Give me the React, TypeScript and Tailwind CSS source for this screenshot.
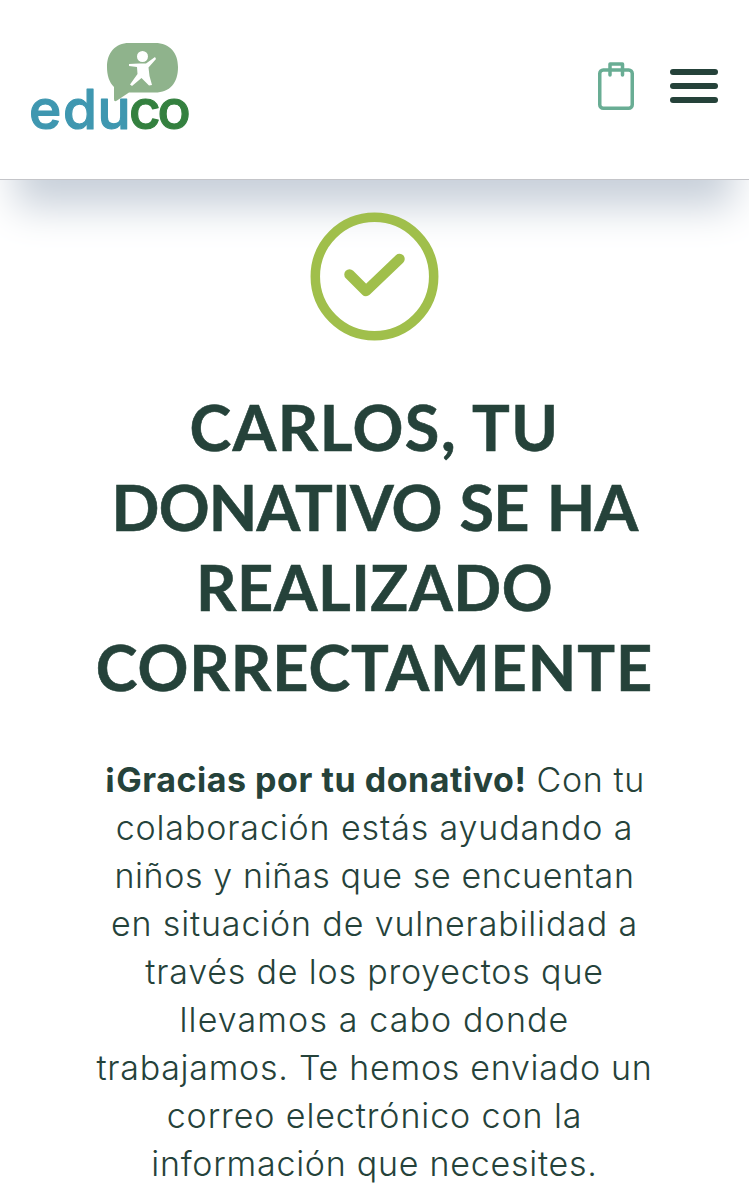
import React from "react";

function Logo() {
  return (
    <svg className="h-[92px] w-[164px] overflow-visible" viewBox="28 42 164 92" role="img" aria-label="educo">
      <text
        x="29 63 97.500 129 157.500"
        y="128.500"
        strokeWidth="1.200"
        strokeLinejoin="round"
        className="fill-[#3f97b0] stroke-[#3f97b0] font-['Inter'] text-[55px] font-medium"
      >
        edu<tspan className="fill-[#34803f] stroke-[#34803f]">co</tspan>
      </text>
      <path d="M129 43H155C170 43 178 53 178 67C178 83 170 92.500 155 92.500H129L117 100.500Q114 102.500 114 99V87C109 82 107 75 107 67C107 53 115 43 129 43Z" fill="#8fb38c" />
      <circle cx="142.500" cy="56.500" r="5.500" fill="white" />
      <path d="M129 64L139 63.500H146L155 57L156 59L148.500 67.500L149.500 76L152 85L149 85.500L141.500 78L132 86L130 84.500L137.500 74L137 67L129 66Z" fill="white" />
    </svg>
  );
}

export default function App() {
  return (
    <div className="min-h-[1200px] w-full overflow-hidden bg-white text-[#25423a]">
      <header className="flex h-[180px] items-start justify-between border-b border-[#c4c5c9] bg-white pt-[42px] pr-[31px] pl-7 shadow-[0_42px_38px_-15px_rgb(200,208,218)]">
        <Logo />
        <div className="flex gap-9 pt-5">
          <svg className="h-12 w-9" viewBox="0 0 36 48" fill="none" stroke="#69ad94" strokeWidth="3.500" strokeLinecap="round" strokeLinejoin="round">
            <rect x="1.750" y="8" width="32.500" height="38.250" rx="3.500" />
            <path d="M12 13V2H24.500V13" />
          </svg>
          <div className="flex flex-col gap-2 pt-[7px]">
            <span className="h-1.5 w-12 rounded-full bg-[#25423a]" />
            <span className="h-1.5 w-12 rounded-full bg-[#25423a]" />
            <span className="h-1.5 w-12 rounded-full bg-[#25423a]" />
          </div>
        </div>
      </header>

      <main className="flex flex-col items-center pt-8 text-center whitespace-nowrap">
        <svg className="relative h-[129px] w-[129px]" viewBox="0 0 129 129" fill="none" stroke="#a0bf4b" strokeWidth="9.500">
          <circle cx="64.500" cy="64.500" r="59.200" />
          <path d="M39.500 62.500L56 79L89.500 47" strokeLinecap="round" strokeLinejoin="round" strokeWidth="10.500" />
        </svg>

        <h1 className="mt-[46px] flex flex-col items-center font-['Lato',sans-serif] text-[63px] leading-[80px] font-bold [-webkit-text-stroke:0.6px_#25423a]">
          <span className="tracking-[1.5px]">CARLOS, TU</span>
          <span className="tracking-[-0.8px] [word-spacing:3.500px]">DONATIVO SE HA</span>
          <span className="tracking-[0.5px]">REALIZADO</span>
          <span className="tracking-[0.95px]">CORRECTAMENTE</span>
        </h1>

        <p className="mt-[49px] flex flex-col items-center font-['Inter',sans-serif] text-[34px] leading-[48px] font-light">
          <span className="tracking-[0.6px]">
            <b className="font-bold tracking-[0.53px] [font-feature-settings:'case']">¡Gracias por tu donativo!</b> Con tu
          </span>
          <span className="tracking-[0.87px]">colaboración estás ayudando a</span>
          <span className="tracking-[0.62px]">niños y niñas que se encuentan</span>
          <span className="tracking-[0.86px]">en situación de vulnerabilidad a</span>
          <span className="tracking-[0.82px]">través de los proyectos que</span>
          <span className="tracking-[1.12px]">llevamos a cabo donde</span>
          <span className="tracking-[0.73px]">trabajamos. Te hemos enviado un</span>
          <span className="tracking-[0.9px]">correo electrónico con la</span>
          <span className="tracking-[0.75px]">información que necesites.</span>
        </p>
      </main>
    </div>
  );
}
